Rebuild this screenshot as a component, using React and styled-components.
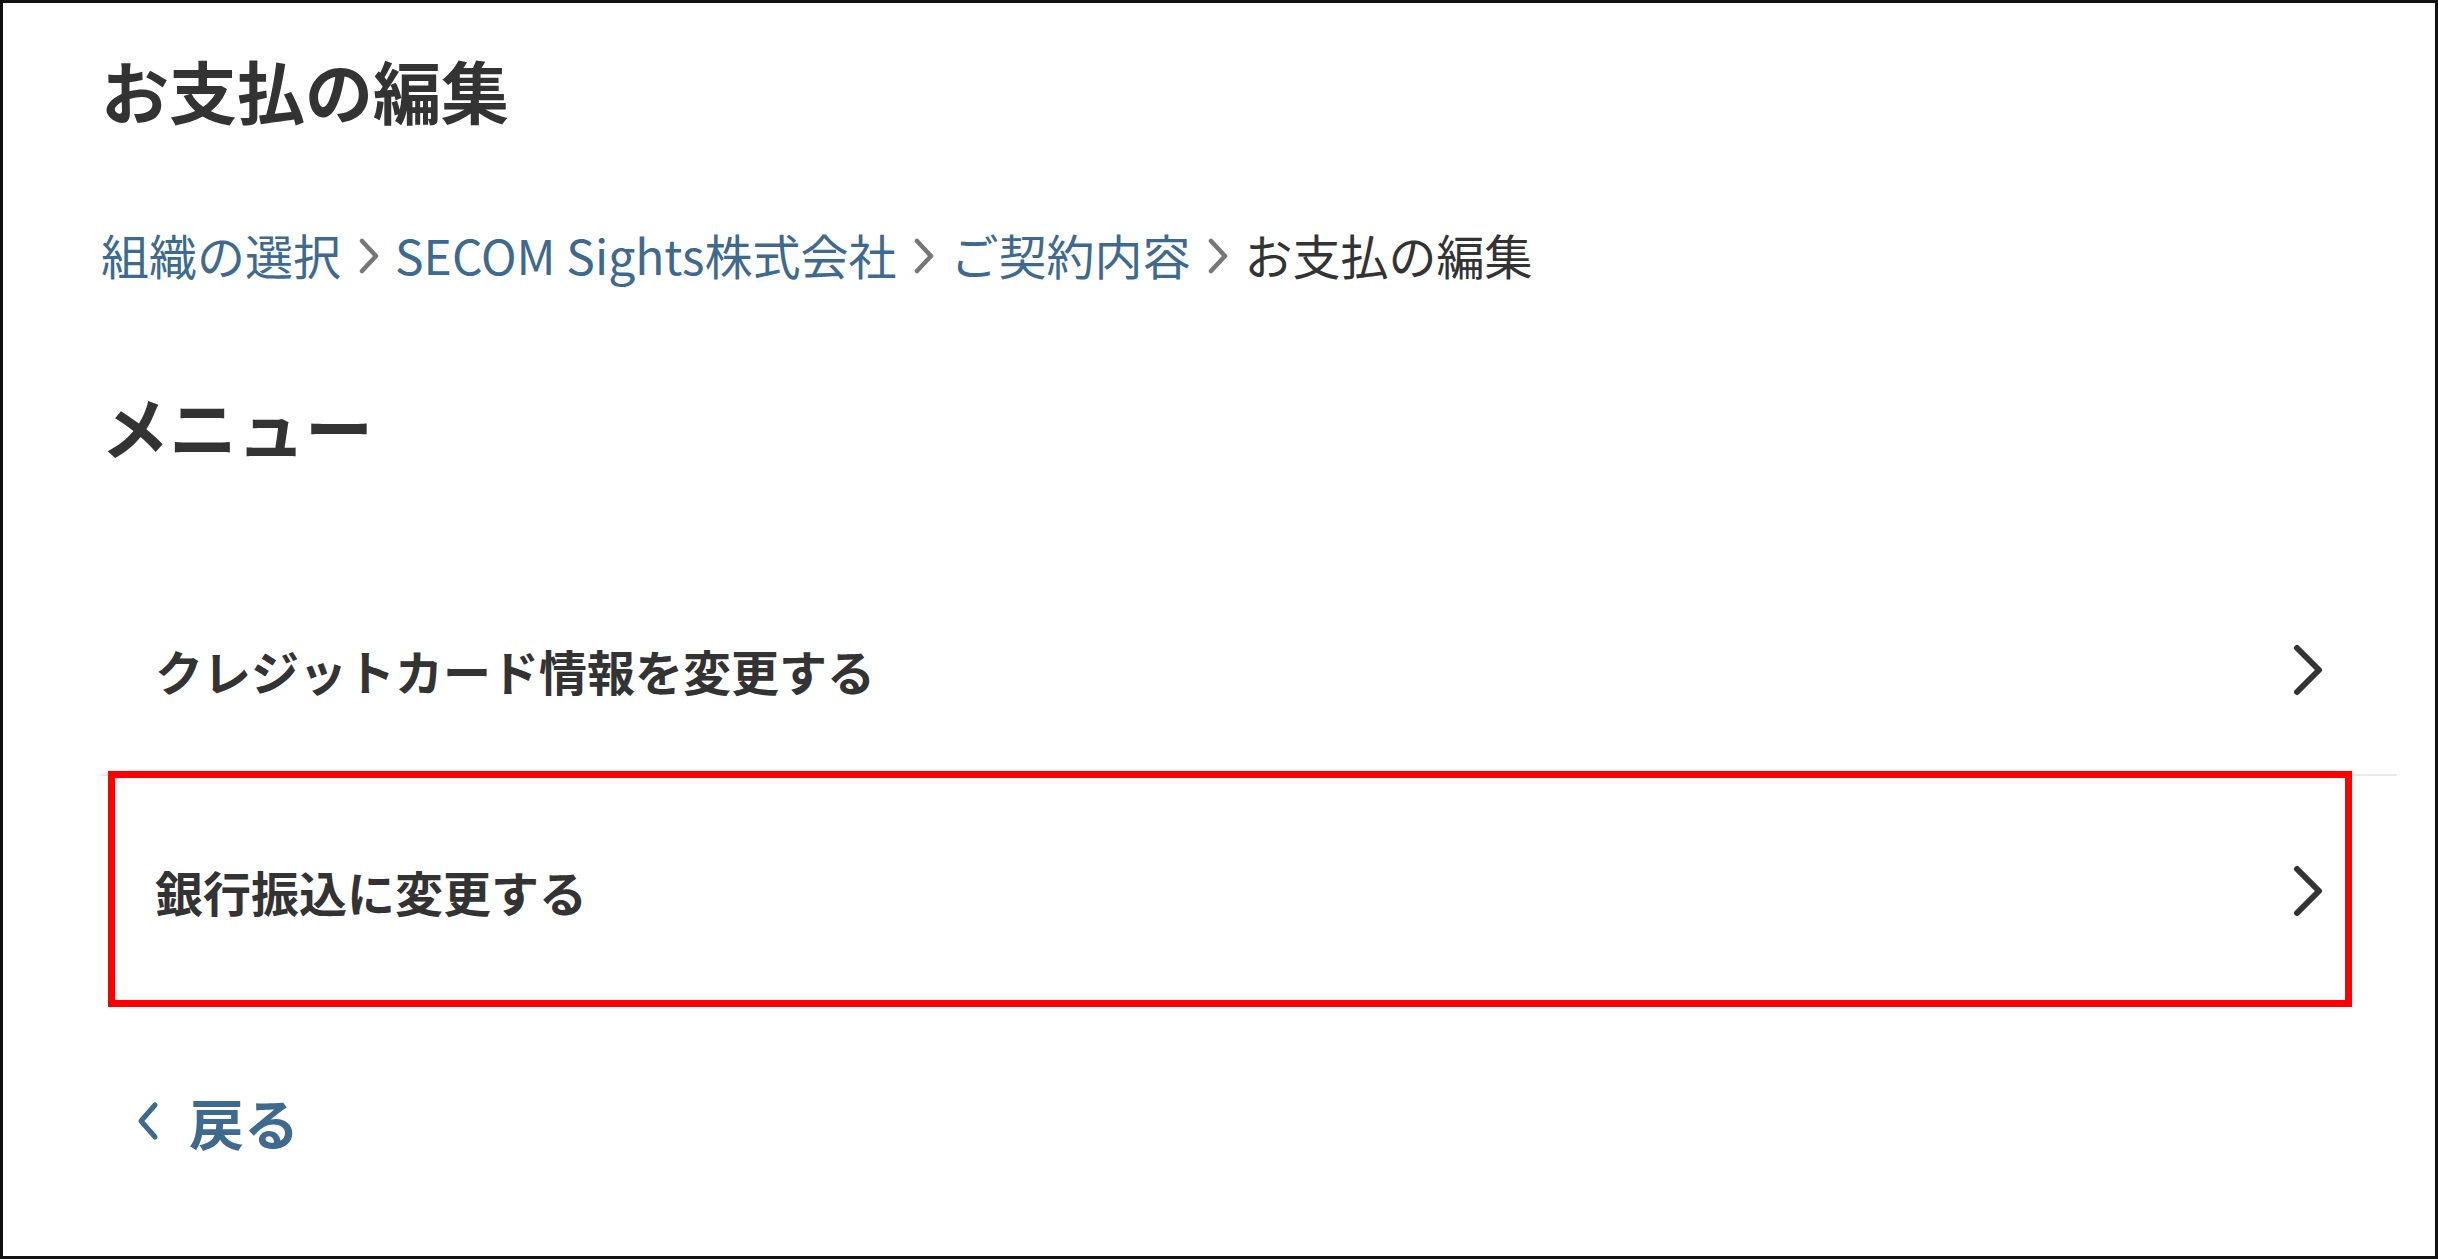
import React from 'react';
import styled, { createGlobalStyle } from 'styled-components';

const GlobalStyle = createGlobalStyle`
    html, body {
        margin: 0;
        padding: 0;
        background: #fff;
    }
    body {
        font-family: "Noto Sans CJK JP", "Noto Sans", sans-serif;
        color: #333;
    }
`;

// styled-components

const Frame = styled.div`
    width: 2438px;
    height: 1259px;
    box-sizing: border-box;
    border: 3px solid #111;
    padding: 36px 38px 0 98px;
    display: flex;
    flex-direction: column;
`;

const PageTitle = styled.h1`
    margin: 0;
    font-size: 68px;
    line-height: 102px;
    font-weight: 700;
    color: #333;
`;

const Crumbs = styled.nav`
    display: flex;
    align-items: center;
    margin-top: 78px;
    height: 70px;
    font-size: 48px;
    line-height: 70px;
`;

const CrumbLink = styled.a`
    color: #3d6a8e;
    text-decoration: none;
    white-space: nowrap;
`;

const CrumbCurrent = styled.span`
    color: #333;
    white-space: nowrap;
`;

const CrumbSep = styled.svg`
    width: 24px;
    height: 38px;
    margin: 4px 14px 0 16px;
    flex-shrink: 0;
`;

const SectionTitle = styled.h2`
    margin: 86px 0 0;
    font-size: 68px;
    line-height: 102px;
    font-weight: 700;
    color: #333;
`;

const MenuList = styled.ul`
    list-style: none;
    margin: 89px 0 0;
    padding: 0;
`;

const MenuRow = styled.li`
    position: relative;
    display: flex;
    align-items: center;
    justify-content: space-between;
    height: ${p => p.$tall}px;
    padding: 0 74px 0 54px;
    border-bottom: ${p => (p.$last ? 'none' : '2px solid #e9e9e9')};
    font-size: 48px;
    font-weight: 700;
    color: #333;

    &::after {
        content: '';
        display: ${p => (p.$marked ? 'block' : 'none')};
        position: absolute;
        top: -5px;
        left: 7px;
        right: 45px;
        height: 236px;
        box-sizing: border-box;
        border: 7px solid #ff0000;
        pointer-events: none;
    }
`;

const RowChevron = styled.svg`
    width: 30px;
    height: 52px;
    flex-shrink: 0;
`;

const BackLink = styled.a`
    display: flex;
    align-items: center;
    gap: 28px;
    margin: 80px 0 0 34px;
    font-size: 55px;
    line-height: 70px;
    font-weight: 700;
    color: #3d6a8e;
    text-decoration: none;
`;

const BackChevron = styled.svg`
    width: 26px;
    height: 40px;
`;

// components

const Sep = () => (
    <CrumbSep viewBox="0 0 24 38">
        <path d="M5 4 L19 19 L5 34" fill="none" stroke="#777" strokeWidth="4.5" strokeLinecap="round" strokeLinejoin="round" />
    </CrumbSep>
);

const MenuItem = ({ label, tall, last, marked }) => (
    <MenuRow $tall={tall} $last={last} $marked={marked}>
        <span>{label}</span>
        <RowChevron viewBox="0 0 30 52">
            <path d="M4 4 L26 26 L4 48" fill="none" stroke="#333" strokeWidth="6" strokeLinecap="round" strokeLinejoin="round" />
        </RowChevron>
    </MenuRow>
);

const App = () => {
    const crumbs = ['組織の選択', 'SECOM Sights株式会社', 'ご契約内容'];

    return (
        <>
            <GlobalStyle />
            <Frame>
                <PageTitle>お支払の編集</PageTitle>
                <Crumbs>
                    {crumbs.map(c => (
                        <React.Fragment key={c}>
                            <CrumbLink href="#">{c}</CrumbLink>
                            <Sep />
                        </React.Fragment>
                    ))}
                    <CrumbCurrent>お支払の編集</CrumbCurrent>
                </Crumbs>
                <SectionTitle>メニュー</SectionTitle>
                <MenuList>
                    <MenuItem label="クレジットカード情報を変更する" tall={208} />
                    <MenuItem label="銀行振込に変更する" tall={230} last marked />
                </MenuList>
                <BackLink href="#">
                    <BackChevron viewBox="0 0 26 40">
                        <path d="M20 4 L6 20 L20 36" fill="none" stroke="#3d6a8e" strokeWidth="5" strokeLinecap="round" strokeLinejoin="round" />
                    </BackChevron>
                    戻る
                </BackLink>
            </Frame>
        </>
    );
};

export default App;
